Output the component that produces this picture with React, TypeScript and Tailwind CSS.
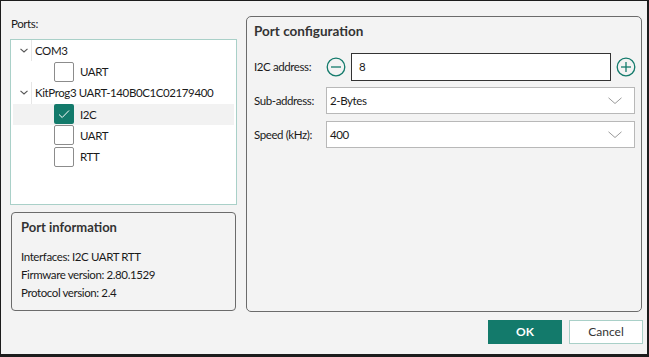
import React from "react";

const font = { fontFamily: "Lato, 'Liberation Sans', sans-serif" };

function Chevron() {
  return (
    <svg width="8" height="5" viewBox="0 0 8 5" className="shrink-0">
      <path d="M0.5 0.8 L4 4 L7.5 0.8" fill="none" stroke="#555" strokeWidth="1.1" />
    </svg>
  );
}

function Checkbox({ checked }: { checked?: boolean }) {
  if (checked) {
    return (
      <div className="w-[20px] h-[20px] rounded-[2px] bg-[#137a6b] flex items-center justify-center shrink-0">
        <svg width="12" height="10" viewBox="0 0 12 10">
          <path d="M1 5.5 L4.2 8.5 L11 1.5" fill="none" stroke="#fff" strokeWidth="1" />
        </svg>
      </div>
    );
  }
  return <div className="w-[20px] h-[20px] rounded-[2px] border border-[#8c8c8c] bg-white shrink-0" />;
}

function ParentRow({ label }: { label: string }) {
  return (
    <div className="h-[21.2px] flex items-center">
      <div className="w-[19px] flex justify-center pl-[6px]">
        <Chevron />
      </div>
      <div className="w-px self-stretch bg-[#e6e6e6] ml-[1px]" />
      <span className="ml-[3px] text-[11.5px] tracking-[-0.4px] text-[#1a1a1a]">{label}</span>
    </div>
  );
}

function ChildRow({ label, checked, selected }: { label: string; checked?: boolean; selected?: boolean }) {
  return (
    <div className={`h-[21.2px] flex items-center mx-[2px] ${selected ? "bg-[#f2f2f2]" : ""}`}>
      <div className="ml-[41px]">
        <Checkbox checked={checked} />
      </div>
      <span className="ml-[6px] text-[11.5px] tracking-[-0.4px] text-[#1a1a1a]">{label}</span>
    </div>
  );
}

function CircleIcon({ plus }: { plus?: boolean }) {
  return (
    <svg width="20" height="20" viewBox="0 0 20 20" className="shrink-0">
      <circle cx="10" cy="10" r="8.8" fill="none" stroke="#137a6b" strokeWidth="1.3" />
      <path d="M5 10 H15" stroke="#137a6b" strokeWidth="1.3" />
      {plus && <path d="M10 5 V15" stroke="#137a6b" strokeWidth="1.3" />}
    </svg>
  );
}

function DropChevron() {
  return (
    <svg width="14" height="8" viewBox="0 0 14 8">
      <path d="M0.5 0.8 L7 6.5 L13.5 0.8" fill="none" stroke="#9a9a9a" strokeWidth="1" />
    </svg>
  );
}

function SelectBox({ value }: { value: string }) {
  return (
    <div className="w-[309px] h-[27px] border border-[#b8b8b8] bg-white flex items-center justify-between pl-[3px] pr-[12px]">
      <span className="text-[11.5px] tracking-[-0.4px] text-[#1a1a1a]">{value}</span>
      <DropChevron />
    </div>
  );
}

export default function App() {
  return (
    <div
      style={font}
      className="w-[649px] h-[357px] box-border bg-[#f3f3f3] border-[#1c1c1c] border-t border-l border-r-2 border-b-[3px] flex flex-col"
    >
      <div className="flex pl-[9px] pt-[15px] gap-[9px]">
        <div className="w-[227px] flex flex-col">
          <div className="h-[16px] leading-[16px] text-[11.5px] tracking-[-0.4px] text-[#1a1a1a] pl-[1px]">Ports:</div>
          <div className="mt-[7px] h-[166px] border border-[#a9d0c8] bg-white pt-0">
            <ParentRow label="COM3" />
            <ChildRow label="UART" />
            <ParentRow label="KitProg3 UART-140B0C1C02179400" />
            <ChildRow label="I2C" checked selected />
            <ChildRow label="UART" />
            <ChildRow label="RTT" />
          </div>
          <div className="mt-[7px] mx-[1px] h-[99px] border border-[#6b6b6b] rounded-[4px] pl-[9px] pt-[6px]">
            <div className="text-[13px] font-bold text-[#333] leading-[16px]">Port information</div>
            <div className="mt-[13px] flex flex-col text-[11.5px] tracking-[-0.4px] text-[#1a1a1a] leading-[18px]">
              <span>Interfaces: I2C UART RTT</span>
              <span>Firmware version: 2.80.1529</span>
              <span>Protocol version: 2.4</span>
            </div>
          </div>
        </div>
        <div className="w-[396px] h-[296px] border border-[#6b6b6b] rounded-[5px] pl-[7px] pt-[5px]">
          <div className="text-[13.5px] font-bold text-[#333] leading-[18px]">Port configuration</div>
          <div className="mt-[13px] flex items-center h-[28px]">
            <span className="w-[72px] text-[11.5px] tracking-[-0.4px] text-[#1a1a1a]">I2C address:</span>
            <CircleIcon />
            <div className="ml-[5px] w-[260px] h-[28px] border border-[#333] bg-white flex items-center pl-[7px]">
              <span className="text-[11.5px] text-[#1a1a1a]">8</span>
            </div>
            <div className="ml-[5px]">
              <CircleIcon plus />
            </div>
          </div>
          <div className="mt-[6px] flex items-center">
            <span className="w-[72px] text-[11.5px] tracking-[-0.4px] text-[#1a1a1a]">Sub-address:</span>
            <SelectBox value="2-Bytes" />
          </div>
          <div className="mt-[7px] flex items-center">
            <span className="w-[72px] text-[11.5px] tracking-[-0.4px] text-[#1a1a1a]">Speed (kHz):</span>
            <SelectBox value="400" />
          </div>
        </div>
      </div>
      <div className="flex justify-end gap-[7px] pr-[4px] mt-[8px]">
        <button className="w-[74px] h-[24px] bg-[#137a6b] text-white text-[12px] font-bold">OK</button>
        <button className="w-[74px] h-[24px] bg-white border border-[#a9d0c8] text-[#333] text-[12px]">Cancel</button>
      </div>
    </div>
  );
}
